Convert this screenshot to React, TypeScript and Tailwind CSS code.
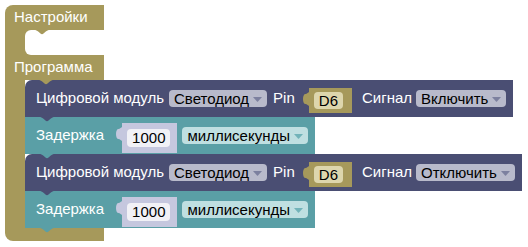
import React from "react";

// block colours
const OLIVE = "bg-[#a6995b]";
const SLATE = "bg-[#4a4e73]";
const TEAL = "bg-[#5a9fa6]";

function NextTab({ fill, left }: { fill: string; left: string }) {
  return (
    <svg
      width="16"
      height="5"
      viewBox="0 0 16 5"
      className={`absolute top-full z-10 ${left}`}
    >
      <path
        d="M0 0 C2 0 3 0.6 4.5 1.8 L6.5 3.6 C7.4 4.3 8.6 4.3 9.5 3.6 L11.5 1.8 C13 0.6 14 0 16 0 Z"
        fill={fill}
      />
    </svg>
  );
}

function OutputTab({ fill }: { fill: string }) {
  return (
    <svg
      width="7"
      height="14"
      viewBox="0 0 7 14"
      className="absolute left-[-6px] top-[4px]"
    >
      <path d="M7 0 V14 C5 14 4 12 2.5 12 C1 12 0 10 0 7 C0 4 1 2 2.5 2 C4 2 5 0 7 0 Z" fill={fill} />
    </svg>
  );
}

function Dropdown({
  label,
  pill,
  arrow,
}: {
  label: string;
  pill: string;
  arrow: string;
}) {
  return (
    <span
      className={`flex items-center h-[17px] rounded-[4px] pl-[5px] pr-[5px] text-black leading-[17px] ${pill}`}
    >
      {label}
      <svg width="9" height="5" viewBox="0 0 9 5" className="ml-[4px] mt-[1px]">
        <path d="M0 0 H9 L5 4.5 C4.7 4.8 4.3 4.8 4 4.5 Z" fill={arrow} />
      </svg>
    </span>
  );
}

function DigitalWrite({ signal }: { signal: string }) {
  return (
    <div
      className={`relative flex items-center h-[37px] w-fit pl-[11px] pr-[7px] rounded-tl-[7px] ${SLATE}`}
    >
      <span>Цифровой модуль</span>
      <span className="ml-[5px]">
        <Dropdown label="Светодиод" pill="bg-[#b8bacb]" arrow="#7c809f" />
      </span>
      <span className="ml-[6px]">Pin</span>
      <div
        className={`relative ml-[14px] mt-[3px] flex items-center h-[25px] pl-[5px] pr-[9px] ${OLIVE}`}
      >
        <OutputTab fill="#a6995b" />
        <span className="h-[17px] leading-[17px] rounded-[4px] px-[5px] bg-[#ddd6ad] text-black">
          D6
        </span>
      </div>
      <span className="ml-[10px]">Сигнал</span>
      <span className="ml-[4px]">
        <Dropdown label={signal} pill="bg-[#b8bacb]" arrow="#7c809f" />
      </span>
      <NextTab fill="#4a4e73" left="left-[14px]" />
    </div>
  );
}

function Delay() {
  return (
    <div
      className={`relative flex items-center h-[37px] w-fit pl-[11px] pr-[7px] ${TEAL}`}
    >
      <span>Задержка</span>
      <div className="relative ml-[18px] mt-[4px] flex items-center h-[30px] pl-[5px] pr-[7px] bg-[#c5c7de]">
        <OutputTab fill="#c5c7de" />
        <span className="h-[18px] leading-[18px] rounded-[4px] px-[5px] bg-[#f1f1f6] text-black">
          1000
        </span>
      </div>
      <span className="ml-[5px]">
        <Dropdown label="миллисекунды" pill="bg-[#bfdfe1]" arrow="#72b3b9" />
      </span>
      <NextTab fill="#5a9fa6" left="left-[14px]" />
    </div>
  );
}

export default function App() {
  return (
    <div className="w-[528px] h-[247px] bg-white pt-[5px] pl-[5px] font-['Liberation_Sans',Arial,sans-serif] text-[15px] text-white overflow-hidden">
      {/* Настройки */}
      <div
        className={`relative flex items-center h-[25px] w-[99px] pl-[9px] rounded-tl-[8px] ${OLIVE}`}
      >
        Настройки
        <NextTab fill="#a6995b" left="left-[29px]" />
      </div>
      <div className={`flex h-[25px] w-[99px] ${OLIVE}`}>
        <div className="ml-[20px] flex-1 bg-white rounded-l-[6px]" />
      </div>

      {/* Программа */}
      <div className={`relative flex items-center h-[25px] w-[99px] pl-[9px] ${OLIVE}`}>
        Программа
        <NextTab fill="#a6995b" left="left-[33px]" />
      </div>
      <div className="flex">
        <div className={`w-[20px] ${OLIVE}`} />
        <div className="flex flex-col">
          <DigitalWrite signal="Включить" />
          <Delay />
          <DigitalWrite signal="Отключить" />
          <Delay />
        </div>
      </div>
      <div className={`h-[13px] w-[99px] rounded-bl-[8px] ${OLIVE}`} />
    </div>
  );
}
